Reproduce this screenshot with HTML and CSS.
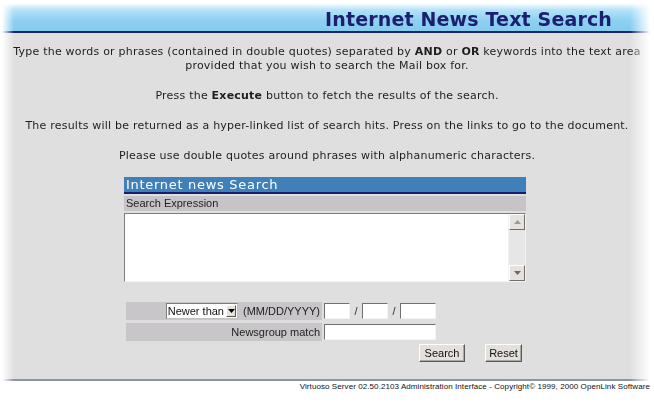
FILE: index.html
```html
<!DOCTYPE html>
<html>
<head>
<meta charset="utf-8">
<title>Internet News Text Search</title>
<link rel="stylesheet" href="styles.css">
</head>
<body>
<div class="panel">
  <header class="banner"><h1>Internet News Text Search</h1></header>
  <div class="intro">
    <p>Type the words or phrases (contained in double quotes) separated by <b>AND</b> or <b>OR</b> keywords into the text area<br>provided that you wish to search the Mail box for.</p>
    <p>Press the <b>Execute</b> button to fetch the results of the search.</p>
    <p>The results will be returned as a hyper-linked list of search hits. Press on the links to go to the document.</p>
    <p>Please use double quotes around phrases with alphanumeric characters.</p>
  </div>
  <form class="search">
    <div class="form-title">Internet news Search</div>
    <div class="label-row">Search Expression</div>
    <div class="expr">
      <textarea class="expr-text"></textarea>
      <div class="vscroll">
        <span class="sbtn"><svg width="7" height="4" viewBox="0 0 7 4"><path d="M0 4L3.5 0L7 4Z" fill="#9a9a9a"/></svg></span>
        <span class="strack"></span>
        <span class="sbtn"><svg width="7" height="4" viewBox="0 0 7 4"><path d="M0 0L3.5 4L7 0Z" fill="#6a6a6a"/></svg></span>
      </div>
    </div>
    <div class="rows">
      <div class="cell">
        <span class="select"><span class="select-val">Newer than</span><span class="select-btn"><svg width="7" height="4" viewBox="0 0 7 4"><path d="M0 0L3.5 4L7 0Z" fill="#000"/></svg></span></span>
        <span>(MM/DD/YYYY)</span>
      </div>
      <div class="inputs">
        <input class="field small" type="text"><span class="slash">/</span><input class="field small" type="text"><span class="slash">/</span><input class="field year" type="text">
      </div>
      <div class="cell">Newsgroup match</div>
      <div class="inputs">
        <input class="field wide" type="text">
      </div>
    </div>
    <div class="actions">
      <button type="button" class="btn btn-search">Search</button>
      <button type="button" class="btn btn-reset">Reset</button>
    </div>
  </form>
</div>
<footer class="foot">Virtuoso Server 02.50.2103 Administration Interface - Copyright© 1999, 2000 OpenLink Software</footer>
</body>
</html>
```

FILE: styles.css
```css
html, body {
  margin: 0;
  padding: 0;
  background: #ffffff;
}

body {
  width: 654px;
  height: 408px;
  overflow: hidden;
  font-family: "DejaVu Sans", Verdana, sans-serif;
  color: #1e1e1e;
}

.panel {
  background: #dfdfdf;
  border-bottom: 2px solid #8a94a2;
  padding-bottom: 17px;
  -webkit-mask-image: linear-gradient(to right, transparent 2px, #000 14px, #000 calc(100% - 24px), transparent calc(100% - 4px));
  mask-image: linear-gradient(to right, transparent 2px, #000 14px, #000 calc(100% - 24px), transparent calc(100% - 4px));
}

.banner {
  height: 31px;
  border-bottom: 2px solid #1b2570;
  background: linear-gradient(to bottom, #ffffff 0px, #ffffff 3px, #b4e2f8 10px, #8fd1f1 20px, #84cbee 31px);
  display: flex;
  justify-content: flex-end;
  padding-right: 42px;
}

.banner h1 {
  margin: 0;
  padding-top: 8px;
  font-size: 19px;
  line-height: 22px;
  font-weight: bold;
  color: #1a1f6e;
  letter-spacing: 0.15px;
}

.intro {
  padding-top: 12px;
  text-align: center;
  font-size: 11px;
  line-height: 14px;
  letter-spacing: 0.22px;
}

.intro p {
  margin: 0 0 16px 0;
}

.intro p:last-child {
  margin-bottom: 0;
}

.search {
  width: 402px;
  margin: 14px 0 0 124px;
  font-family: "Liberation Sans", Arial, sans-serif;
  font-size: 11px;
  color: #222;
}

.form-title {
  height: 15px;
  line-height: 15px;
  background: #3f80b9;
  color: #ffffff;
  font-family: "DejaVu Sans", Verdana, sans-serif;
  font-size: 13px;
  letter-spacing: 0.7px;
  padding-left: 2px;
  border-bottom: 2px solid #161f6c;
}

.label-row {
  margin-top: 2px;
  height: 15px;
  line-height: 15px;
  background: #c7c4c7;
  padding-left: 2px;
}

.expr {
  margin-top: 2px;
  height: 67px;
  display: flex;
  border-top: 1px solid #7c7c7c;
  border-left: 1px solid #7c7c7c;
  border-bottom: 1px solid #f4f4f4;
  border-right: 1px solid #f4f4f4;
  background: #ffffff;
}

.expr-text {
  flex: 1;
  border: none;
  margin: 0;
  padding: 2px;
  resize: none;
  outline: none;
  background: #ffffff;
  font-family: "Liberation Mono", monospace;
  font-size: 12px;
}

.vscroll {
  width: 16px;
  display: flex;
  flex-direction: column;
  border-left: 1px solid #f0f0f0;
}

.sbtn {
  height: 14px;
  background: #e6e3de;
  border-top: 1px solid #ffffff;
  border-left: 1px solid #ffffff;
  border-right: 1px solid #6e6e6e;
  border-bottom: 1px solid #6e6e6e;
  display: flex;
  align-items: center;
  justify-content: center;
}

.strack {
  flex: 1;
  background-color: #f3f3f3;
  background-image: radial-gradient(#d6d6d6 0.6px, transparent 0.8px);
  background-size: 2px 2px;
}

.rows {
  margin-top: 20px;
  padding-left: 2px;
  display: grid;
  grid-template-columns: 196px 1fr;
  column-gap: 2px;
  row-gap: 3px;
}

.cell {
  height: 18px;
  background: #c8c6c8;
  display: flex;
  align-items: center;
  justify-content: flex-end;
  gap: 5px;
  padding-right: 2px;
  color: #222;
}

.select {
  display: inline-flex;
  align-items: center;
  height: 14px;
  background: #ffffff;
  border: 1px solid #7c7c7c;
  border-right-color: #c0c0c0;
  border-bottom-color: #c0c0c0;
  padding-left: 1px;
}

.select-val {
  line-height: 14px;
  padding-right: 2px;
  color: #111;
}

.select-btn {
  width: 10px;
  height: 12px;
  margin-right: 1px;
  background: #e6e3de;
  border-top: 1px solid #ffffff;
  border-left: 1px solid #ffffff;
  border-right: 1px solid #555;
  border-bottom: 1px solid #555;
  box-sizing: border-box;
  display: flex;
  align-items: center;
  justify-content: center;
}

.inputs {
  height: 18px;
  display: flex;
  align-items: center;
}

.field {
  box-sizing: border-box;
  height: 16px;
  margin: 0;
  padding: 0 2px;
  background: #ffffff;
  border: 1px solid #f4f4f4;
  border-top-color: #707070;
  border-left-color: #707070;
  font-size: 11px;
}

.small {
  width: 26px;
}

.year {
  width: 36px;
}

.wide {
  width: 112px;
}

.slash {
  width: 12px;
  text-align: center;
  color: #333;
}

.actions {
  margin-top: 3px;
  display: flex;
  justify-content: flex-end;
  gap: 20px;
  padding-right: 4px;
}

.btn {
  height: 18px;
  margin: 0;
  padding: 0;
  background: #e4e1dc;
  border: 1px solid #ffffff;
  border-right-color: #5a5a5a;
  border-bottom-color: #5a5a5a;
  box-shadow: inset -1px -1px 0 #a8a8a8;
  font-family: "Liberation Sans", Arial, sans-serif;
  font-size: 11px;
  color: #111;
}

.btn-search {
  width: 46px;
}

.btn-reset {
  width: 37px;
}

.foot {
  text-align: right;
  padding-right: 4px;
  margin-top: 1px;
  font-family: "Liberation Sans", Arial, sans-serif;
  font-size: 8px;
  line-height: 10px;
  color: #111;
  letter-spacing: 0.08px;
}
```
